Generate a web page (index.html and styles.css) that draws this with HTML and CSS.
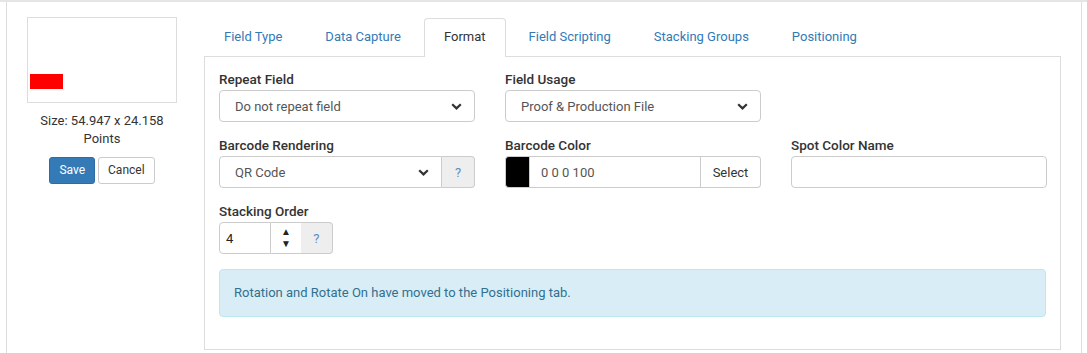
FILE: index.html
```html
<!DOCTYPE html>
<html lang="en">
<head>
  <meta charset="UTF-8" />
  <title>Field Format</title>
  <link rel="stylesheet" href="styles.css">
</head>
<body>
  <div class="frame">
    <div class="editor">

      <div class="preview-col">
        <div class="preview">
          <div class="field-box"></div>
        </div>
        <p class="size">Size: 54.947 x 24.158<br>Points</p>
        <div class="actions">
          <button class="btn btn-primary">Save</button>
          <button class="btn btn-default">Cancel</button>
        </div>
      </div>

      <div class="main-col">
        <ul class="tabs">
          <li><a href="#">Field Type</a></li>
          <li><a href="#">Data Capture</a></li>
          <li class="active"><a href="#">Format</a></li>
          <li><a href="#">Field Scripting</a></li>
          <li><a href="#">Stacking Groups</a></li>
          <li><a href="#">Positioning</a></li>
        </ul>

        <div class="panel">
          <div class="form-grid">
            <div class="form-group">
              <label>Repeat Field</label>
              <div class="select">
                <span>Do not repeat field</span>
                <svg class="chev" width="11" height="7" viewBox="0 0 11 7"><path d="M1.2 1.2l4.3 4.2 4.3-4.2" fill="none" stroke="#333" stroke-width="2.2"/></svg>
              </div>
            </div>
            <div class="form-group">
              <label>Field Usage</label>
              <div class="select">
                <span>Proof &amp; Production File</span>
                <svg class="chev" width="11" height="7" viewBox="0 0 11 7"><path d="M1.2 1.2l4.3 4.2 4.3-4.2" fill="none" stroke="#333" stroke-width="2.2"/></svg>
              </div>
            </div>
            <div></div>

            <div class="form-group">
              <label>Barcode Rendering</label>
              <div class="input-group">
                <div class="select grow">
                  <span>QR Code</span>
                  <svg class="chev" width="11" height="7" viewBox="0 0 11 7"><path d="M1.2 1.2l4.3 4.2 4.3-4.2" fill="none" stroke="#333" stroke-width="2.2"/></svg>
                </div>
                <span class="addon help">?</span>
              </div>
            </div>
            <div class="form-group">
              <label>Barcode Color</label>
              <div class="input-group">
                <span class="swatch"></span>
                <div class="input grow">0 0 0 100</div>
                <span class="addon pick">Select</span>
              </div>
            </div>
            <div class="form-group">
              <label>Spot Color Name</label>
              <div class="input"></div>
            </div>

            <div class="form-group">
              <label>Stacking Order</label>
              <div class="input-group narrow">
                <div class="input num">4</div>
                <span class="spin"><span>&#9650;</span><span>&#9660;</span></span>
                <span class="addon help">?</span>
              </div>
            </div>
          </div>

          <div class="alert">Rotation and Rotate On have moved to the Positioning tab.</div>
        </div>
      </div>

    </div>
  </div>
</body>
</html>
```

FILE: styles.css
```css
body {
  margin: 0;
  font-family: Roboto, 'Liberation Sans', sans-serif;
  font-size: 13px;
  color: #333;
  background: #fff;
}
.frame {
  border-top: 2px solid #e5e5e5;
  height: 351px;
  overflow: hidden;
}
.editor {
  margin: 0 5px 0 6px;
  border-left: 1px solid #ddd;
  border-right: 1px solid #ddd;
  height: 100%;
  display: flex;
  padding: 15px 20px 0 20px;
  box-sizing: border-box;
  gap: 27px;
}
.preview-col {
  width: 150px;
  flex-shrink: 0;
  text-align: center;
}
.preview {
  height: 84px;
  border: 1px solid #ddd;
  position: relative;
}
.field-box {
  position: absolute;
  left: 2px;
  top: 56px;
  width: 33px;
  height: 15px;
  background: #f00;
}
.size {
  margin: 9px 0 9px;
  font-size: 13px;
  line-height: 18px;
}
.actions {
  display: flex;
  justify-content: center;
  gap: 3px;
}
.btn {
  font-family: inherit;
  font-size: 12px;
  line-height: 17px;
  padding: 4px 9px;
  border-radius: 3px;
  border: 1px solid #ccc;
  background: #fff;
  color: #333;
}
.btn-primary {
  background: #337ab7;
  border-color: #2e6da4;
  color: #fff;
}
.main-col {
  flex: 1;
  min-width: 0;
  padding-top: 1px;
}
.tabs {
  list-style: none;
  margin: 0;
  padding: 0;
  display: flex;
  position: relative;
  z-index: 1;
}
.tabs li {
  margin-right: 3px;
}
.tabs a {
  display: block;
  padding: 9px 19px 10px;
  line-height: 18px;
  font-size: 13px;
  color: #337ab7;
  text-decoration: none;
  border: 1px solid transparent;
  border-bottom: none;
  border-radius: 4px 4px 0 0;
}
.tabs .active a {
  color: #333;
  background: #fff;
  border-color: #ddd;
  padding-bottom: 11px;
  margin-bottom: -1px;
}
.panel {
  border: 1px solid #ddd;
  padding: 14px 14px 0;
  height: 294px;
  box-sizing: border-box;
}
.form-grid {
  display: grid;
  grid-template-columns: 256px 256px 256px;
  column-gap: 30px;
}
.form-group {
  margin-bottom: 15px;
}
label {
  display: block;
  font-weight: 500;
  font-size: 13.5px;
  line-height: 16px;
  margin-bottom: 3px;
  color: #333;
}
.select, .input {
  height: 32px;
  box-sizing: border-box;
  border: 1px solid #ccc;
  border-radius: 4px;
  display: flex;
  align-items: center;
  padding: 0 12px 0 15px;
  color: #555;
  background: #fff;
}
.select span {
  flex: 1;
}
.chev {
  margin-top: 1px;
}
.input-group {
  display: flex;
  height: 32px;
}
.input-group .grow {
  flex: 1;
}
.input-group > * {
  border-radius: 0;
}
.input-group > :first-child {
  border-radius: 4px 0 0 4px;
}
.input-group > :last-child {
  border-radius: 0 4px 4px 0;
}
.addon {
  box-sizing: border-box;
  height: 32px;
  border: 1px solid #ccc;
  border-left: none;
  display: flex;
  align-items: center;
  justify-content: center;
}
.help {
  width: 33px;
  background: #eee;
  color: #5b8dc2;
}
.pick {
  width: 60px;
  background: #fff;
  color: #333;
}
.swatch {
  width: 24px;
  height: 32px;
  box-sizing: border-box;
  background: #000;
  border: 1px solid #ccc;
  border-right: none;
}
.input-group .input.grow {
  padding-left: 11px;
}
.narrow {
  width: 114px;
}
.num {
  width: 53px;
  padding-left: 6px;
  color: #222;
}
.spin {
  box-sizing: border-box;
  width: 30px;
  height: 32px;
  border-top: 1px solid #ccc;
  border-bottom: 1px solid #ccc;
  display: flex;
  flex-direction: column;
  align-items: center;
  justify-content: center;
  font-size: 10px;
  line-height: 12px;
  color: #222;
}
.alert {
  margin-top: 0;
  padding: 15px 14px;
  line-height: 16px;
  background: #d9edf7;
  border: 1px solid #bce8f1;
  border-radius: 4px;
  color: #31708f;
  font-size: 13px;
}
```
